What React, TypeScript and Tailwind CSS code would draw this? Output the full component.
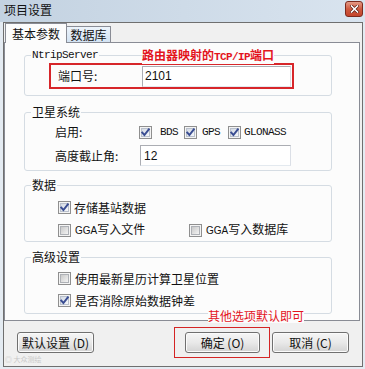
import React from "react";

const CJK = "font-['Noto_Sans_CJK_SC','Noto_Sans',sans-serif]";
const MONO = "font-['Liberation_Mono',monospace] text-[11px] tracking-[-0.6px]";

function Check({ checked }: { checked?: boolean }) {
  return (
    <span className="relative w-[13px] h-[13px] border border-[#8f8f8f] bg-[#f4f4f4] flex items-center justify-center shrink-0">
      <span
        className={
          checked
            ? "w-[9px] h-[9px] border border-[#b9c0cc] bg-linear-to-br from-[#d3d9e3] to-[#f6f8fb]"
            : "w-[9px] h-[9px] border border-[#aeb1b6] bg-linear-to-br from-[#c9c9c9] to-[#f4f4f4]"
        }
      />
      {checked && (
        <svg className="absolute inset-0" width="11" height="11" viewBox="0 0 11 11">
          <path d="M2.3 5.6 L4.4 8 L8.8 2.4" fill="none" stroke="#3a4d92" strokeWidth="2" strokeLinecap="square" />
        </svg>
      )}
    </span>
  );
}

function Group({
  label,
  mono,
  className,
  children,
}: {
  label: string;
  mono?: boolean;
  className: string;
  children?: React.ReactNode;
}) {
  return (
    <div className={"relative ml-[19px] w-[308px] border border-[#d5dce3] rounded-[3px] " + className}>
      <span
        className={
          "absolute -top-[8px] left-[6px] px-[1px] bg-[#fcfcfc] leading-[14px] text-[#111] " +
          (mono ? MONO : "text-[12px]")
        }
      >
        {label}
      </span>
      {children}
    </div>
  );
}

function Btn({ children, className }: { children: React.ReactNode; className?: string }) {
  return (
    <div
      className={
        "h-[21px] border border-[#707070] rounded-[3px] bg-linear-to-b from-[#f6f6f6] via-[#e9e9e9] to-[#d3d3d3] shadow-[inset_0_0_0_1px_#fbfbfb] flex items-center justify-center text-[12px] leading-[14px] text-[#111] " +
        (className || "")
      }
    >
      {children}
    </div>
  );
}

export default function App() {
  return (
    <div className={"relative w-[365px] h-[369px] bg-[#e4ebf2] flex flex-col overflow-hidden " + CJK}>
      {/* title bar */}
      <div className="h-[22px] flex items-start justify-between pl-[4px] pr-[2px] bg-linear-to-r from-[#c3d2e1] to-[#d9e4ef]">
        <span className="mt-[3px] text-[12px] leading-[14px] text-[#111]">项目设置</span>
        <div className="mt-[1px] w-[18px] h-[16px] rounded-[3px] border border-[#7d2a1e] bg-linear-to-b from-[#e49a86] via-[#cf5a40] to-[#c4442b] flex items-center justify-center">
          <svg width="9" height="8" viewBox="0 0 9 8">
            <path d="M1.5 1 L7.5 7 M7.5 1 L1.5 7" stroke="#5a1a10" strokeWidth="3" strokeLinecap="square" />
            <path d="M1.5 1 L7.5 7 M7.5 1 L1.5 7" stroke="#ffffff" strokeWidth="1.6" strokeLinecap="square" />
          </svg>
        </div>
      </div>

      {/* client area */}
      <div className="ml-[3px] w-[360px] h-[345px] border border-[#6f6f6f] bg-[#f0f0f0] flex flex-col">
        {/* tabs */}
        <div className="h-[19px] flex items-end pl-[1px]">
          <div className="relative z-10 w-[62px] h-[20px] -mb-px border border-b-0 border-[#898c95] bg-[#fcfcfc] flex items-center justify-center text-[12px] leading-[14px] text-[#111]">
            基本参数
          </div>
          <div className="w-[45px] h-[16px] -ml-px border border-b-0 border-[#898c95] bg-linear-to-b from-[#edf4fb] to-[#d3e3f3] flex items-center justify-center text-[12px] leading-[14px] text-[#111]">
            数据库
          </div>
        </div>

        {/* panel */}
        <div className="relative w-[356px] h-[279px] border border-[#898c95] bg-[#fcfcfc] flex flex-col">
          <Group label="NtripServer" mono className="mt-[12px] h-[41px]">
            <span className="absolute -top-[8px] left-[117px] bg-[#fcfcfc] text-[12px] leading-[14px] font-bold text-[#e3141c]">
              路由器映射的<span className={MONO}>TCP/IP</span>端口
            </span>
            <div className="ml-[24px] mt-[7px] w-[245px] h-[26px] border-2 border-[#d7262a] flex items-center pl-[7px]">
              <span className="w-[84px] text-[12px] leading-[14px] text-[#111]">端口号:</span>
              <div className="w-[149px] h-[21px] border border-[#abadb3] border-b-[#e3e9ef] border-r-[#dbdfe6] bg-white flex items-center pl-[2px] font-['Liberation_Sans',sans-serif] text-[12px] text-[#111]">
                2101
              </div>
            </div>
          </Group>

          <Group label="卫星系统" className="mt-[16px] h-[59px]">
            <div className="pl-[30px] pt-[12px] flex flex-col">
              <div className="h-[14px] flex items-center text-[12px] leading-[14px] text-[#111]">
                <span className="w-[84px]">启用:</span>
                <Check checked />
                <span className={MONO + " ml-[8px]"}>BDS</span>
                <span className="ml-[6px]"><Check checked /></span>
                <span className={MONO + " ml-[5px]"}>GPS</span>
                <span className="ml-[8px]"><Check checked /></span>
                <span className={MONO + " ml-[3px]"}>GLONASS</span>
              </div>
              <div className="mt-[6px] h-[21px] flex items-center text-[12px] leading-[14px] text-[#111]">
                <span className="w-[85px]">高度截止角:</span>
                <div className="w-[151px] h-[21px] border border-[#abadb3] border-b-[#e3e9ef] border-r-[#dbdfe6] bg-white flex items-center pl-[3px] font-['Liberation_Sans',sans-serif] text-[12px]">
                  12
                </div>
              </div>
            </div>
          </Group>

          <Group label="数据" className="mt-[14px] h-[57px]">
            <div className="pl-[33px] pt-[15px] flex flex-col gap-[8px] text-[12px] leading-[14px] text-[#111]">
              <div className="h-[13px] flex items-center">
                <Check checked />
                <span className="ml-[3px]">存储基站数据</span>
              </div>
              <div className="h-[13px] grid grid-cols-[131px_auto]">
                <div className="flex items-center">
                  <Check />
                  <span className="ml-[4px]">
                    <span className="font-['Liberation_Sans',sans-serif] text-[10px]">GGA</span>写入文件
                  </span>
                </div>
                <div className="flex items-center">
                  <Check />
                  <span className="ml-[4px]">
                    <span className="font-['Liberation_Sans',sans-serif] text-[10px]">GGA</span>写入数据库
                  </span>
                </div>
              </div>
            </div>
          </Group>

          <Group label="高级设置" className="mt-[15px] h-[57px]">
            <div className="pl-[33px] pt-[14px] flex flex-col gap-[9px] text-[12px] leading-[14px] text-[#111]">
              <div className="h-[13px] flex items-center">
                <Check />
                <span className="ml-[4px]">使用最新星历计算卫星位置</span>
              </div>
              <div className="h-[13px] flex items-center">
                <Check checked />
                <span className="ml-[4px]">是否消除原始数据钟差</span>
              </div>
            </div>
          </Group>

          <span className="absolute left-[203px] top-[266px] text-[12px] leading-[14px] text-[#e3141c] bg-[#fcfcfc]">
            其他选项默认即可
          </span>
        </div>

        {/* buttons */}
        <div className="mt-[11px] flex items-start">
          <Btn className="ml-[13px] w-[77px]">默认设置 (D)</Btn>
          <div className="relative ml-[91px]">
            <span className="absolute -left-[11px] -top-[5px] w-[96px] h-[31px] border border-[#d42424]" />
            <Btn className="w-[75px]">确定 (O)</Btn>
          </div>
          <Btn className="ml-[12px] w-[77px]">取消 (C)</Btn>
        </div>
      </div>

      <span className="absolute left-[5px] top-[355px] text-[7px] leading-[9px] text-[#c9c9c9]">◎ 大众测绘</span>
    </div>
  );
}
